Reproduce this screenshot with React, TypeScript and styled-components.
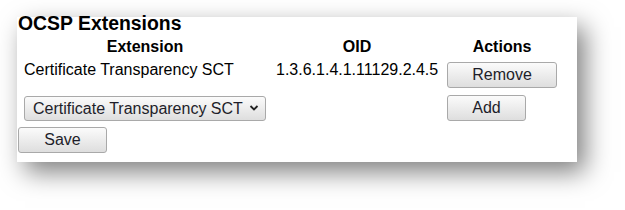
import React from "react";
import styled, { createGlobalStyle } from "styled-components";

const Global = createGlobalStyle`
  html, body { margin: 0; padding: 0; background: #ffffff; }
  body { font-family: "Liberation Sans", Arial, sans-serif; color: #000; }
`;

const Page = styled.div`
  width: 625px;
  height: 210px;
  padding: 17px 0 0 17px;
  box-sizing: border-box;
`;

const Panel = styled.section`
  width: 560px;
  height: 145px;
  background: #fff;
  box-shadow: 8px 10px 24px rgba(0, 0, 0, 0.5);
  display: flex;
  flex-direction: column;
`;

const Title = styled.h3`
  margin: -5px 0 0 1px;
  font-size: 19.4px;
  line-height: 22px;
  font-weight: bold;
`;

const Grid = styled.div`
  display: grid;
  grid-template-columns: 254px 170px 120px;
  margin: 3px 0 0 1px;
  align-items: center;
`;

const Head = styled.div`
  font-size: 16px;
  font-weight: bold;
  text-align: center;
  line-height: 19px;
`;

const Cell = styled.div<{ $inset?: number }>`
  font-size: 16px;
  line-height: 19px;
  white-space: nowrap;
  padding: 0 0 0 ${(p) => p.$inset ?? 6}px;
`;

const Button = styled.button<{ $w: number }>`
  width: ${(p) => p.$w}px;
  height: 26px;
  padding: 0;
  font-family: "Liberation Sans", Arial, sans-serif;
  font-size: 16px;
  color: #1e1e2a;
  border: 1px solid #a9a9a9;
  border-radius: 3px;
  background: linear-gradient(#fbfbfb, #dedede);
`;

const Select = styled.div`
  width: 242px;
  height: 25px;
  box-sizing: border-box;
  border: 1px solid #a9a9a9;
  border-radius: 3px;
  background: linear-gradient(#fbfbfb, #dedede);
  display: flex;
  align-items: center;
  justify-content: space-between;
  padding: 0 6px 0 8px;
  font-size: 16px;
  color: #1e1e2a;
`;

const ActionCell = styled.div`
  padding-left: 5px;
  display: flex;
`;

const Footer = styled.div`
  padding: 6px 0 0 1px;
`;

export default function App() {
  return (
    <>
      <Global />
      <Page>
        <Panel>
          <Title>OCSP Extensions</Title>
          <Grid>
            <Head>Extension</Head>
            <Head>OID</Head>
            <Head>Actions</Head>
            <Cell style={{ marginTop: -5 }}>Certificate Transparency SCT</Cell>
            <Cell $inset={4} style={{ marginTop: -5 }}>1.3.6.1.4.1.11129.2.4.5</Cell>
            <ActionCell style={{ marginTop: 6 }}>
              <Button $w={110}>Remove</Button>
            </ActionCell>
            <Cell style={{ marginTop: 7 }}>
              <Select>
                <span>Certificate Transparency SCT</span>
                <svg width="10" height="8" viewBox="0 0 10 8">
                  <path d="M1.5 2 L5 5.5 L8.5 2" fill="none" stroke="#222" strokeWidth="1.8" />
                </svg>
              </Select>
            </Cell>
            <Cell />
            <ActionCell style={{ marginTop: 7 }}>
              <Button $w={79}>Add</Button>
            </ActionCell>
          </Grid>
          <Footer>
            <Button $w={89}>Save</Button>
          </Footer>
        </Panel>
      </Page>
    </>
  );
}
